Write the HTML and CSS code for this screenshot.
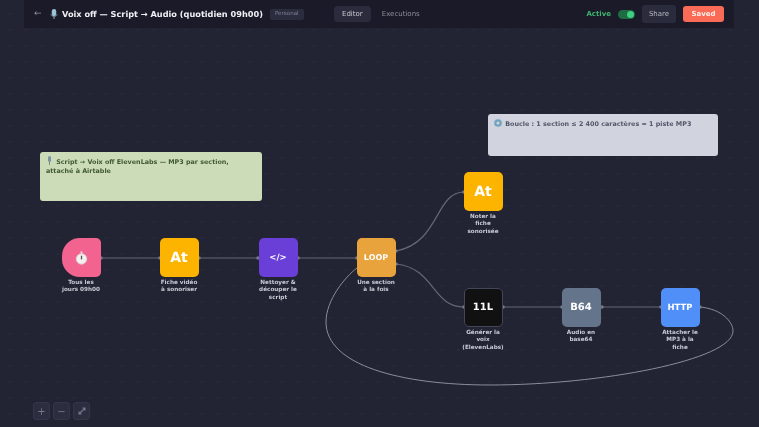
FILE: index.html
```html
<!DOCTYPE html>
<html lang="en">

<head>
    <meta charset="UTF-8">
    <title>Voix off</title>
    <link rel="stylesheet" href="styles.css">
</head>

<body>
    <header class="topbar">
        <div class="topbar-left">
            <span class="back">←</span>
            <svg class="mic" width="8" height="12" viewBox="0 0 9 12">
                <rect x="2" y="0.5" width="5" height="8" rx="2.5" fill="#9cc4d4" />
                <path d="M4.5 8.5v3" stroke="#7d8b95" stroke-width="1.5" />
                <path d="M1 6c0 2 1.5 3 3.5 3s3.5-1 3.5-3" fill="none" stroke="#6f7f8a" />
            </svg>
            <span class="title">Voix off — Script → Audio (quotidien 09h00)</span>
            <span class="badge">Personal</span>
        </div>
        <nav class="tabs">
            <span class="tab tab-on">Editor</span>
            <span class="tab">Executions</span>
        </nav>
        <div class="topbar-right">
            <span class="active">Active</span>
            <span class="toggle"><span class="knob"></span></span>
            <button class="share">Share</button>
            <button class="saved">Saved</button>
        </div>
    </header>

    <main class="canvas">
        <svg class="edges" width="759" height="427" viewBox="0 0 759 427">
            <g class="wire">
                <path d="M101 258H160" />
                <path d="M199 258H258" />
                <path d="M298 258H357" />
                <path d="M396 251C440 243 435 192 464 192" />
                <path d="M396 264C435 268 432 307 464 307" />
                <path d="M503 307H562" />
                <path d="M602 307H661" />
            </g>
            <path class="loop" d="M700 307C722 309 733 322 733 331C733 360 600 385 490 385C400 385 326 365 326 322C326 300 345 277 357 268" />
            <g class="ports">
                <circle cx="101" cy="258" r="1.8" />
                <circle cx="160" cy="258" r="1.8" />
                <circle cx="199" cy="258" r="1.8" />
                <circle cx="258" cy="258" r="1.8" />
                <circle cx="298" cy="258" r="1.8" />
                <circle cx="357" cy="258" r="1.8" />
                <circle cx="396" cy="251" r="1.8" />
                <circle cx="396" cy="264" r="1.8" />
                <circle cx="464" cy="192" r="1.8" />
                <circle cx="464" cy="307" r="1.8" />
                <circle cx="503" cy="307" r="1.8" />
                <circle cx="562" cy="307" r="1.8" />
                <circle cx="602" cy="307" r="1.8" />
                <circle cx="661" cy="307" r="1.8" />
                <circle cx="700" cy="307" r="1.8" />
            </g>
        </svg>

        <div class="note note-green">
            <svg class="note-mic" width="7" height="9" viewBox="0 0 7 9">
                <rect x="2" y="0" width="3" height="6" rx="1.5" fill="#7c93a0" />
                <path d="M3.5 6v3" stroke="#7c8a80" />
            </svg>
            Script → Voix off ElevenLabs — MP3 par section,<br>attaché à Airtable
        </div>
        <div class="note note-grey">
            <svg class="note-gear" width="8" height="8" viewBox="0 0 8 8">
                <circle cx="4" cy="4" r="2.6" fill="none" stroke="#6fa3bd" stroke-width="2" />
                <circle cx="4" cy="4" r="3.8" fill="none" stroke="#6fa3bd" stroke-dasharray="1 1" />
            </svg>
            Boucle : 1 section ≤ 2 400 caractères = 1 piste MP3
        </div>

        <div class="node node-trigger">
            <div class="tile tile-trigger">
                <svg width="13" height="14" viewBox="0 0 14 15">
                    <circle cx="7" cy="8.5" r="5.6" fill="#f4f1f0" stroke="#d9d2d4" />
                    <rect x="6" y="0.5" width="2" height="2" fill="#e8e2e4" />
                    <path d="M7 5v4" stroke="#555" stroke-width="1.4" />
                </svg>
            </div>
            <div class="label">Tous les<br>jours 09h00</div>
        </div>
        <div class="node node-fiche">
            <div class="tile tile-at">At</div>
            <div class="label">Fiche vidéo<br>à sonoriser</div>
        </div>
        <div class="node node-code">
            <div class="tile tile-code">&lt;/&gt;</div>
            <div class="label">Nettoyer &amp;<br>découper le<br>script</div>
        </div>
        <div class="node node-loop">
            <div class="tile tile-loop">LOOP</div>
            <div class="label">Une section<br>à la fois</div>
        </div>
        <div class="node node-noter">
            <div class="tile tile-at">At</div>
            <div class="label">Noter la<br>fiche<br>sonorisée</div>
        </div>
        <div class="node node-eleven">
            <div class="tile tile-eleven">11L</div>
            <div class="label">Générer la<br>voix<br>(ElevenLabs)</div>
        </div>
        <div class="node node-b64">
            <div class="tile tile-b64">B64</div>
            <div class="label">Audio en<br>base64</div>
        </div>
        <div class="node node-http">
            <div class="tile tile-http">HTTP</div>
            <div class="label">Attacher le<br>MP3 à la<br>fiche</div>
        </div>

        <div class="zoom">
            <button class="zoom-btn">+</button>
            <button class="zoom-btn">−</button>
            <button class="zoom-btn">
                <svg width="10" height="10" viewBox="0 0 10 10" fill="none" stroke="#77798a" stroke-width="1.1">
                    <path d="M2 8L8 2M5.5 2H8V4.5M2 5.5V8H4.5" />
                </svg>
            </button>
        </div>
    </main>
</body>

</html>
```

FILE: styles.css
```css
* {
    margin: 0;
    padding: 0;
    box-sizing: border-box;
}

body {
    width: 759px;
    height: 427px;
    overflow: hidden;
    position: relative;
    background-color: #222433;
    background-image: radial-gradient(circle, #292b3b 0.8px, transparent 1px);
    background-size: 16px 16px;
    background-position: 2px 6px;
    font-family: "DejaVu Sans", sans-serif;
    text-rendering: geometricPrecision;
}

.topbar {
    display: flex;
    align-items: center;
    width: 710px;
    height: 28px;
    margin-left: 24px;
    padding: 0 10px;
    background: #1a1a28;
    will-change: transform;
}

.topbar-left {
    display: flex;
    align-items: center;
    width: 300px;
}

.back {
    width: 16px;
    font-size: 9px;
    color: #8d8e9b;
}

.mic {
    margin-right: 4px;
}

.title {
    font-size: 8.2px;
    font-weight: 700;
    color: #f0f0f5;
    white-space: nowrap;
}

.badge {
    margin-left: 7px;
    padding: 2px 5px;
    font-size: 5.6px;
    line-height: 7px;
    color: #7f8194;
    background: #2b2c3e;
    border-radius: 2px;
    white-space: nowrap;
}

.tabs {
    display: flex;
    align-items: center;
    gap: 3px;
}

.tab {
    padding: 3px 8px;
    font-size: 7px;
    line-height: 10px;
    color: #8d8e9b;
    border-radius: 4px;
}

.tab-on {
    color: #c9cad3;
    background: #2a2b3c;
}

.topbar-right {
    display: flex;
    align-items: center;
    margin-left: auto;
}

.active {
    font-size: 7px;
    font-weight: 700;
    color: #3fb56f;
    margin-right: 7px;
}

.toggle {
    display: flex;
    align-items: center;
    justify-content: flex-end;
    width: 17px;
    height: 9px;
    padding-right: 1px;
    margin-right: 7px;
    background: #1f6b44;
    border-radius: 5px;
}

.knob {
    width: 7px;
    height: 7px;
    background: #3dd07f;
    border-radius: 50%;
}

button {
    border: none;
    font-family: inherit;
}

.share {
    width: 34px;
    height: 18px;
    margin-right: 7px;
    font-size: 7px;
    color: #b7b8c4;
    background: #2a2b3c;
    border-radius: 3px;
}

.saved {
    width: 41px;
    height: 16px;
    font-size: 7px;
    font-weight: 700;
    color: #fdeeea;
    background: #f96a57;
    border-radius: 3px;
}

/* the flow is a free canvas, nodes sit at their own coordinates */
.canvas {
    position: absolute;
    left: 0;
    top: 0;
    width: 759px;
    height: 427px;
    will-change: transform;
}

.edges {
    position: absolute;
    left: 0;
    top: 0;
}

.wire path {
    fill: none;
    stroke: #666776;
    stroke-width: 1.2;
}

.loop {
    fill: none;
    stroke: #8c8d9b;
    stroke-width: 1;
}

.ports circle {
    fill: #767787;
}

.note {
    position: absolute;
    padding: 4px 6px;
    font-size: 6.4px;
    font-weight: 700;
    line-height: 9px;
    border-radius: 3px;
}

.note-green {
    left: 40px;
    top: 152px;
    width: 222px;
    height: 49px;
    color: #3f5a33;
    background: #cddcb8;
}

.note-grey {
    left: 488px;
    top: 114px;
    width: 230px;
    height: 42px;
    padding-top: 5px;
    color: #52566a;
    background: #d1d4de;
}

.note-mic,
.note-gear {
    margin-right: 1px;
    vertical-align: -1px;
}

.node {
    position: absolute;
    width: 60px;
    display: flex;
    flex-direction: column;
    align-items: center;
}

.node-trigger { left: 51px; top: 238px; }
.node-fiche { left: 149px; top: 238px; }
.node-code { left: 248px; top: 238px; }
.node-loop { left: 346px; top: 238px; }
.node-noter { left: 453px; top: 172px; }
.node-eleven { left: 453px; top: 288px; }
.node-b64 { left: 551px; top: 288px; }
.node-http { left: 650px; top: 288px; }

.tile {
    display: flex;
    align-items: center;
    justify-content: center;
    width: 39px;
    height: 39px;
    font-weight: 700;
    color: #fff;
    border-radius: 5px;
}

.tile-trigger {
    background: #f2648f;
    border-radius: 18px 5px 5px 18px;
}

.tile-at {
    font-size: 14px;
    background: #fcb400;
}

.tile-code {
    font-size: 8.5px;
    background: #6a3fd8;
}

.tile-loop {
    font-size: 8px;
    background: #e8a33d;
}

.tile-eleven {
    font-size: 10px;
    background: #111;
    border: 1px solid #44465a;
}

.tile-b64 {
    font-size: 10px;
    background: #64748b;
}

.tile-http {
    font-size: 8.5px;
    background: #4f8ff7;
}

.label {
    margin-top: 3px;
    width: 60px;
    font-size: 5.7px;
    font-weight: 700;
    line-height: 7.3px;
    text-align: center;
    color: #c9cad6;
    white-space: nowrap;
}

.zoom {
    position: absolute;
    left: 33px;
    top: 402px;
    display: flex;
    gap: 3px;
}

.zoom-btn {
    display: flex;
    align-items: center;
    justify-content: center;
    width: 17px;
    height: 18px;
    font-size: 10px;
    color: #77798a;
    background: #2c2e40;
    border: 1px solid #33354a;
    border-radius: 3px;
}
```
